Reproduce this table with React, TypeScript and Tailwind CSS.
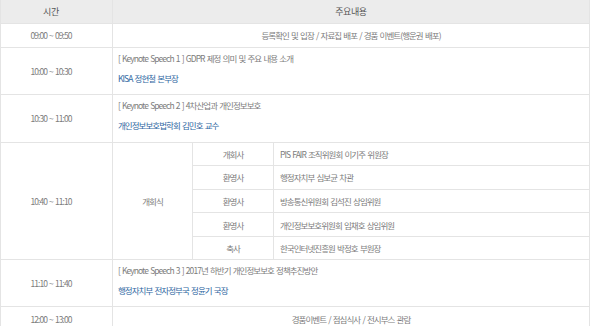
const font = { fontFamily: '"Noto Sans CJK KR", "Noto Sans", sans-serif' };

type Sub = { label: string; text: string };

const subs: Sub[] = [
  { label: "개회사", text: "PIS FAIR 조직위원회 이기주 위원장" },
  { label: "환영사", text: "행정자치부 심보균 차관" },
  { label: "환영사", text: "방송통신위원회 김석진 상임위원" },
  { label: "환영사", text: "개인정보보호위원회 임채호 상임위원" },
  { label: "축사", text: "한국인터넷진흥원 박정호 부원장" },
];

const cell =
  "border border-[#e4e4e4] text-[8.5px] tracking-[-0.95px] [word-spacing:1.2px] text-[#7c7c7c] leading-[12px]";
const timeCell = `${cell} text-center tracking-[-0.4px] pr-[11px]`;

const Keynote = ({ title, name }: { title: string; name: string }) => (
  <td colSpan={3} className={`${cell} text-left align-top px-[5px] pt-[4px]`}>
    <div className="whitespace-nowrap">{title}</div>
    <div className="mt-[8px] text-[#2f67a2] whitespace-nowrap">{name}</div>
  </td>
);

export default function App() {
  return (
    <div className="w-[590px] h-[326px] overflow-hidden bg-white" style={font}>
      <table className="w-[590px] table-fixed border-collapse">
        <colgroup>
          <col className="w-[112px]" />
          <col className="w-[80px]" />
          <col className="w-[81px]" />
          <col />
        </colgroup>
        <thead>
          <tr className="h-[23px] bg-[#ececec]">
            <th className="border border-[#e4e4e4] border-t-0 pr-[11px] text-[9px] tracking-[-0.4px] font-normal text-[#555]">시간</th>
            <th colSpan={3} className="border border-[#e4e4e4] border-t-0 text-[9px] tracking-[-0.4px] font-normal text-[#555]">주요내용</th>
          </tr>
        </thead>
        <tbody>
          <tr className="h-[24px]">
            <td className={timeCell}>09:00 ~ 09:50</td>
            <td colSpan={3} className={`${cell} text-center`}>등록확인 및 입장 / 자료집 배포 / 경품 이벤트(행운권 배포)</td>
          </tr>
          <tr className="h-[47px]">
            <td className={timeCell}>10:00 ~ 10:30</td>
            <Keynote title="[ Keynote Speech 1 ] GDPR 제정 의미 및 주요 내용 소개" name="KISA 정현철 본부장" />
          </tr>
          <tr className="h-[48px]">
            <td className={timeCell}>10:30 ~ 11:00</td>
            <Keynote title="[ Keynote Speech 2 ] 4차산업과 개인정보보호" name="개인정보보호법학회 김민호 교수" />
          </tr>
          {subs.map((s, i) => (
            <tr key={i} className="h-[23.6px]">
              {i === 0 && (
                <>
                  <td rowSpan={5} className={timeCell}>10:40 ~ 11:10</td>
                  <td rowSpan={5} className={`${cell} text-center`}>개회식</td>
                </>
              )}
              <td className={`${cell} text-center`}>{s.label}</td>
              <td className={`${cell} text-left px-[6px]`}>{s.text}</td>
            </tr>
          ))}
          <tr className="h-[47px]">
            <td className={timeCell}>11:10 ~ 11:40</td>
            <Keynote title="[ Keynote Speech 3 ] 2017년 하반기 개인정보보호 정책추진방안" name="행정자치부 전자정부국 정윤기 국장" />
          </tr>
          <tr className="h-[24px]">
            <td className={timeCell}>12:00 ~ 13:00</td>
            <td colSpan={3} className={`${cell} text-center`}>경품이벤트 / 점심식사 / 전시부스 관람</td>
          </tr>
        </tbody>
      </table>
    </div>
  );
}
